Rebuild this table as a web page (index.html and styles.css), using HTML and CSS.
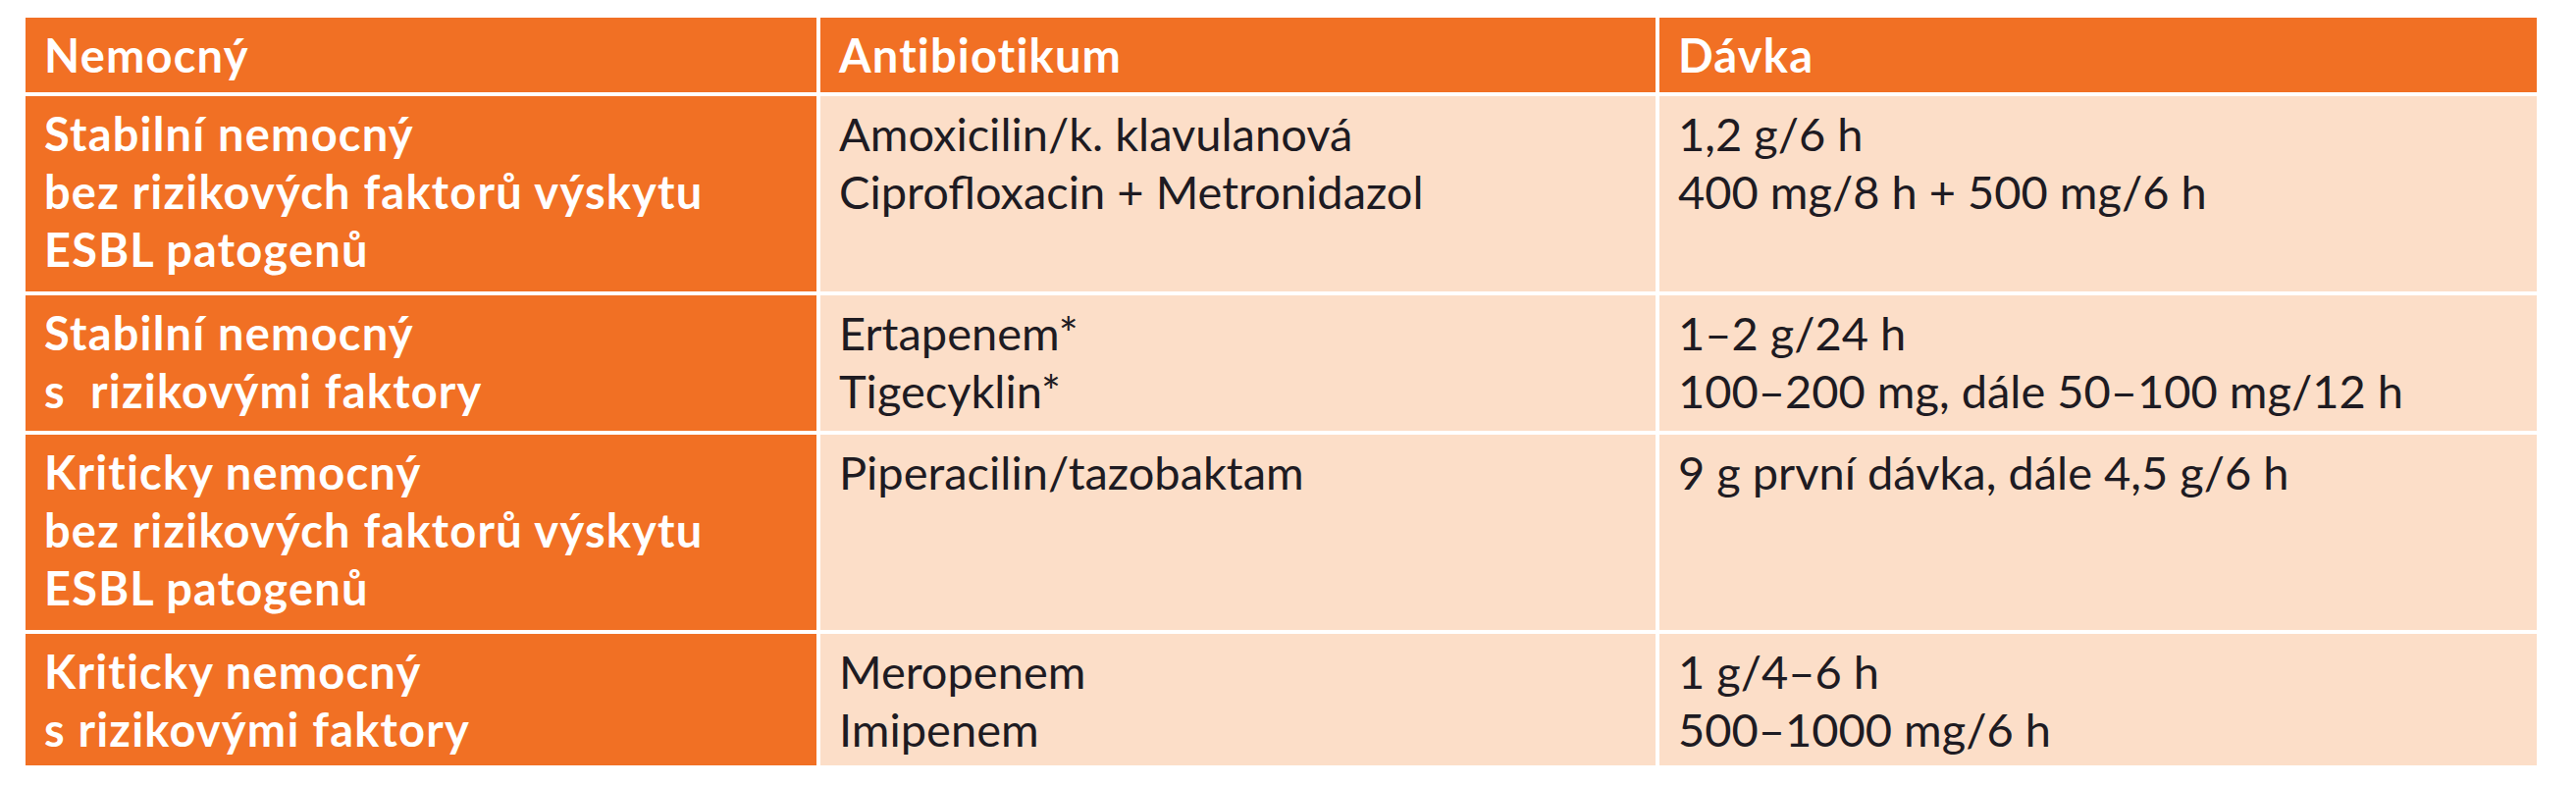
FILE: index.html
```html
<!DOCTYPE html>
<html lang="cs">
<head>
<meta charset="utf-8">
<title>Antibiotika</title>
<link rel="stylesheet" href="styles.css">
</head>
<body>
<div class="page">
  <div class="table">
    <div class="cell head">Nemocný</div>
    <div class="cell head">Antibiotikum</div>
    <div class="cell head">Dávka</div>

    <div class="cell lead">Stabilní nemocný<br>bez rizikových faktorů výskytu<br>ESBL patogenů</div>
    <div class="cell body">Amoxicilin/k. klavulanová<br>Ciprofloxacin + Metronidazol</div>
    <div class="cell body">1,2 g/6 h<br>400 mg/8 h + 500 mg/6 h</div>

    <div class="cell lead">Stabilní nemocný<br>s&nbsp; rizikovými faktory</div>
    <div class="cell body">Ertapenem*<br>Tigecyklin*</div>
    <div class="cell body">1–2 g/24 h<br>100–200 mg, dále 50–100 mg/12 h</div>

    <div class="cell lead">Kriticky nemocný<br>bez rizikových faktorů výskytu<br>ESBL patogenů</div>
    <div class="cell body">Piperacilin/tazobaktam</div>
    <div class="cell body">9 g první dávka, dále 4,5 g/6 h</div>

    <div class="cell lead">Kriticky nemocný<br>s rizikovými faktory</div>
    <div class="cell body">Meropenem<br>Imipenem</div>
    <div class="cell body">1 g/4–6 h<br>500–1000 mg/6 h</div>
  </div>
</div>
</body>
</html>
```
FILE: styles.css
```css
html, body {
  margin: 0;
  padding: 0;
  background: #ffffff;
}

.page {
  padding: 18px 0 0 26px;
  width: 2559px;
}

.table {
  display: grid;
  grid-template-columns: 806px 851px 894px;
  grid-template-rows: 76px 199px 138px 199px 134px;
  gap: 4px;
  background: #ffffff;
  font-family: Lato, "Open Sans", sans-serif;
  font-size: 47px;
  line-height: 59px;
}

.cell {
  padding: 9px 12px 0 19px;
  white-space: nowrap;
}

.head {
  background: #f17024;
  color: #ffffff;
  font-weight: 700;
  letter-spacing: 1.2px;
}

.lead {
  background: #f17024;
  color: #ffffff;
  font-weight: 700;
  letter-spacing: 1.2px;
}

.body {
  background: #fcdec8;
  color: #1e1b22;
  font-weight: 400;
}
```
